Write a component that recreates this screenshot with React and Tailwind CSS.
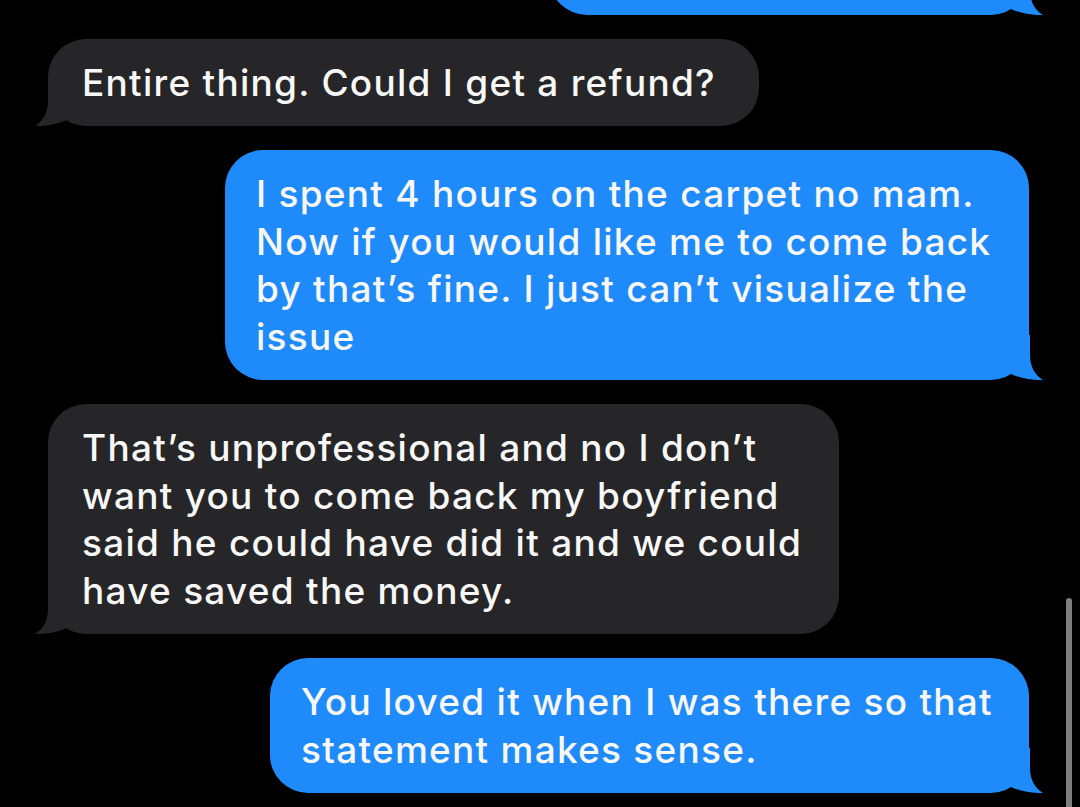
import React from "react";

const font = { fontFamily: "Inter, 'Noto Sans', sans-serif" };

function Tail({ side, color }) {
  // little hook under the bubble, overlaps the rounded corner
  if (side === "left") {
    return (
      <svg className="absolute left-[-13px] bottom-0" width="40" height="45" viewBox="0 0 40 45">
        <path d="M13,0 L13,20 C13,32 8,40 0,45 C10,45.5 24,43 33,38.5 L33,0 Z" fill={color} />
      </svg>
    );
  }
  return (
    <svg className="absolute right-[-14px] bottom-0" width="40" height="45" viewBox="0 0 40 45">
      <path d="M27,0 L27,20 C27,32 32,40 40,45 C30,45.5 16,43 7,38.5 L7,0 Z" fill={color} />
    </svg>
  );
}

function Bubble({ me, width, lines }) {
  const color = me ? "#1f8bfa" : "#262628";
  return (
    <div
      className={
        me
          ? "relative self-end mr-[51px] rounded-[38px] bg-[#1f8bfa] pl-[31px] py-5"
          : "relative self-start ml-[48px] rounded-[38px] bg-[#262628] pl-[34px] py-5"
      }
      style={{ width }}
    >
      <Tail side={me ? "right" : "left"} color={color} />
      <div className="relative text-[37px] font-medium leading-[47.5px] tracking-[0.034em] text-[#f7f7f7] whitespace-nowrap" style={font}>
        {lines.map((l, i) => (
          <div key={i}>{l}</div>
        ))}
      </div>
    </div>
  );
}

export default function App() {
  return (
    <div className="relative w-full h-[807px] overflow-hidden bg-black">
      <div className="flex flex-col gap-6 mt-[-73px]">
        <Bubble me width={480} lines={["\u00a0"]} />
        <Bubble width={711} lines={["Entire thing. Could I get a refund?"]} />
        <Bubble
          me
          width={804}
          lines={[
            "I spent 4 hours on the carpet no mam.",
            "Now if you would like me to come back",
            "by that’s fine. I just can’t visualize the",
            "issue",
          ]}
        />
        <Bubble
          width={791}
          lines={[
            "That’s unprofessional and no I don’t",
            "want you to come back my boyfriend",
            "said he could have did it and we could",
            "have saved the money.",
          ]}
        />
        <Bubble
          me
          width={759}
          lines={["You loved it when I was there so that", "statement makes sense."]}
        />
      </div>
      {/* scroll indicator */}
      <div className="absolute left-[1066px] top-[598px] w-[6px] h-[230px] rounded-full bg-[#7d7d7d]" />
    </div>
  );
}
